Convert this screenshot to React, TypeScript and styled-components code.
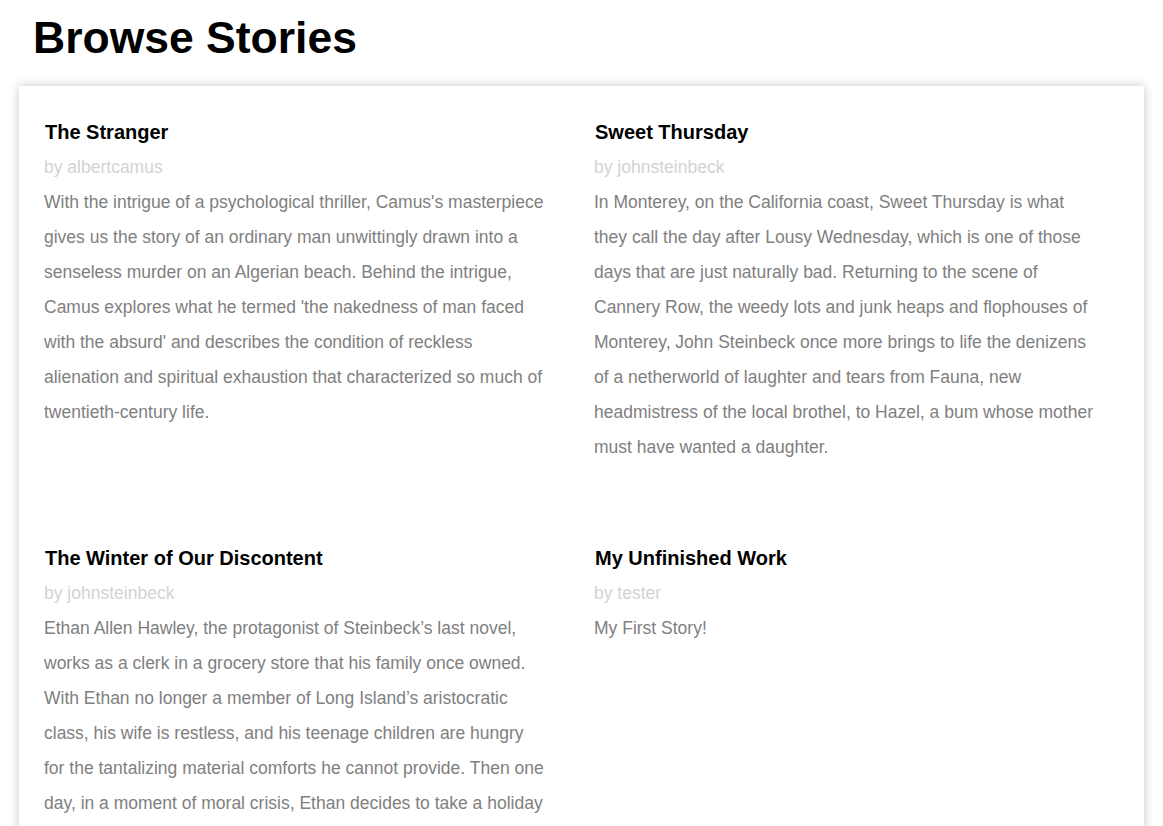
import React from "react";
import styled, { createGlobalStyle } from "styled-components";

const GlobalStyle = createGlobalStyle`
  html, body {
    margin: 0;
    padding: 0;
    background: #ffffff;
    font-family: "Liberation Sans", Arial, sans-serif;
  }
`;

const Page = styled.div`
  padding: 0 19px;
`;

const Heading = styled.h1`
  margin: 0;
  padding: 12px 0 0 14px;
  height: 86px;
  box-sizing: border-box;
  font-size: 44.5px;
  line-height: 52px;
  font-weight: 700;
  color: #000;
`;

const Card = styled.section`
  background: #fff;
  box-shadow: 0 0 10px rgba(0, 0, 0, 0.22);
  padding: 28px 25px 40px 25px;
  display: grid;
  grid-template-columns: 501px 501px;
  column-gap: 49px;
  row-gap: 75px;
`;

const Story = styled.article`
  display: flex;
  flex-direction: column;
`;

const Title = styled.h3`
  margin: 0;
  padding-left: 1px;
  font-size: 20px;
  line-height: 36px;
  font-weight: 700;
  color: #000;
`;

const Author = styled.div`
  font-size: 17.5px;
  line-height: 35px;
  color: #d3d3d3;
`;

const Description = styled.p`
  margin: 0;
  font-size: 17.5px;
  line-height: 35px;
  color: #808080;
`;

const stories = [
  {
    title: "The Stranger",
    author: "albertcamus",
    desc: "With the intrigue of a psychological thriller, Camus's masterpiece gives us the story of an ordinary man unwittingly drawn into a senseless murder on an Algerian beach. Behind the intrigue, Camus explores what he termed 'the nakedness of man faced with the absurd' and describes the condition of reckless alienation and spiritual exhaustion that characterized so much of twentieth-century life.",
  },
  {
    title: "Sweet Thursday",
    author: "johnsteinbeck",
    desc: "In Monterey, on the California coast, Sweet Thursday is what they call the day after Lousy Wednesday, which is one of those days that are just naturally bad. Returning to the scene of Cannery Row, the weedy lots and junk heaps and flophouses of Monterey, John Steinbeck once more brings to life the denizens of a netherworld of laughter and tears from Fauna, new headmistress of the local brothel, to Hazel, a bum whose mother must have wanted a daughter.",
  },
  {
    title: "The Winter of Our Discontent",
    author: "johnsteinbeck",
    desc: "Ethan Allen Hawley, the protagonist of Steinbeck\u2019s last novel, works as a clerk in a grocery store that his family once owned. With Ethan no longer a member of Long Island\u2019s aristocratic class, his wife is restless, and his teenage children are hungry for the tantalizing material comforts he cannot provide. Then one day, in a moment of moral crisis, Ethan decides to take a holiday from his own scrupulous standards.",
  },
  {
    title: "My Unfinished Work",
    author: "tester",
    desc: "My First Story!",
  },
];

export default function App() {
  return (
    <>
      <GlobalStyle />
      <Page>
        <Heading>Browse Stories</Heading>
        <Card>
          {stories.map((s) => (
            <Story key={s.title}>
              <Title>{s.title}</Title>
              <Author>by {s.author}</Author>
              <Description>{s.desc}</Description>
            </Story>
          ))}
        </Card>
      </Page>
    </>
  );
}
